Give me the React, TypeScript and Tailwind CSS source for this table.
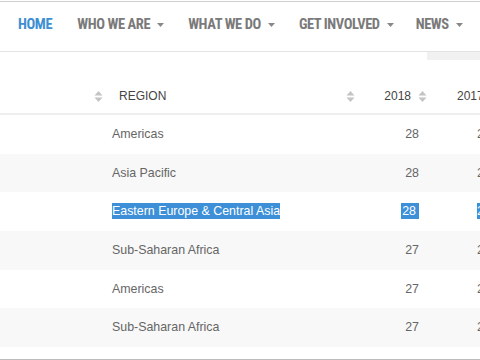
import React from "react";

const navFont = { fontFamily: '"Liberation Sans Narrow", "Roboto Condensed", Roboto, sans-serif' };

function Caret() {
  return (
    <svg width="7" height="4" viewBox="0 0 7 4" className="ml-[7px] mt-[1px]">
      <path d="M0 0 L7 0 L3.5 4 Z" fill="#888" />
    </svg>
  );
}

function SortIcon() {
  return (
    <svg width="9" height="13" viewBox="0 0 9 13">
      <path d="M0.5 5.5 L4.5 1 L8.5 5.5 Z" fill="#c4c4c4" />
      <path d="M0.5 7.5 L4.5 12 L8.5 7.5 Z" fill="#c4c4c4" />
    </svg>
  );
}

const rows = [
  { region: "Americas", a: "28", b: "28" },
  { region: "Asia Pacific", a: "28", b: "28" },
  { region: "Eastern Europe & Central Asia", a: "28", b: "28", sel: true },
  { region: "Sub-Saharan Africa", a: "27", b: "27" },
  { region: "Americas", a: "27", b: "27" },
  { region: "Sub-Saharan Africa", a: "27", b: "27" },
];

export default function App() {
  return (
    <div className="w-[480px] h-[360px] overflow-hidden bg-white flex flex-col" style={{ fontFamily: '"Liberation Sans", Arial, sans-serif' }}>
      <div className="h-[1px] bg-white" />
      <div className="h-[1px] bg-[#cfcfcf]" />
      <nav className="h-[50px] pb-[4px] flex items-center border-b border-[#e3e3e3] text-[14.5px] tracking-[-0.4px] font-bold text-[#7a7a7a] whitespace-nowrap" style={navFont}>
        <span className="ml-[18px] text-[#3d8fd1]">HOME</span>
        <span className="ml-[25px] flex items-center">WHO WE ARE<Caret /></span>
        <span className="ml-[24px] flex items-center">WHAT WE DO<Caret /></span>
        <span className="ml-[24px] flex items-center">GET INVOLVED<Caret /></span>
        <span className="ml-[22px] flex items-center">NEWS<Caret /></span>
      </nav>
      <div className="h-[8px] flex justify-end">
        <div className="w-[53px] bg-[#f1f1f1]" />
      </div>
      <div className="flex-1 flex flex-col">
        <div className="h-[55px] shrink-0 flex items-center pt-[19px] text-[12px] text-[#444] border-b-2 border-[#eeeeee] whitespace-nowrap">
          <div className="w-[108px] flex justify-end pr-[5px] shrink-0"><SortIcon /></div>
          <div className="w-[252px] flex items-center justify-between pl-[11px] pr-[5px] shrink-0">
            <span>REGION</span>
            <SortIcon />
          </div>
          <div className="w-[80px] flex items-center justify-end pr-[13px] shrink-0 gap-[7px]">
            <span>2018</span>
            <SortIcon />
          </div>
          <div className="w-[60px] pl-[17px] shrink-0">2017</div>
        </div>
        {rows.map((r, i) => (
          <div key={i} className={`h-[38.67px] shrink-0 flex items-center text-[12.4px] text-[#666] whitespace-nowrap ${i % 2 === 1 ? "bg-[#f8f8f8]" : "bg-white"}`}>
            <div className="w-[112px] shrink-0" />
            <div className="w-[248px] shrink-0">
              <span className={r.sel ? "bg-[#3d8fd8] text-white py-[1px]" : ""}>{r.region}</span>
            </div>
            <div className="w-[59px] shrink-0 text-right">
              <span className={r.sel ? "bg-[#3d8fd8] text-white pl-[1px] pr-[3px] py-[1px]" : ""}>{r.a}</span>
            </div>
            <div className="w-[58px] shrink-0" />
            <div className="shrink-0">
              <span className={r.sel ? "bg-[#3d8fd8] text-white py-[1px]" : ""}>{r.b}</span>
            </div>
          </div>
        ))}
        <div className="flex-1" />
        <div className="h-[1px] shrink-0 bg-[#bdbdbd]" />
      </div>
    </div>
  );
}
